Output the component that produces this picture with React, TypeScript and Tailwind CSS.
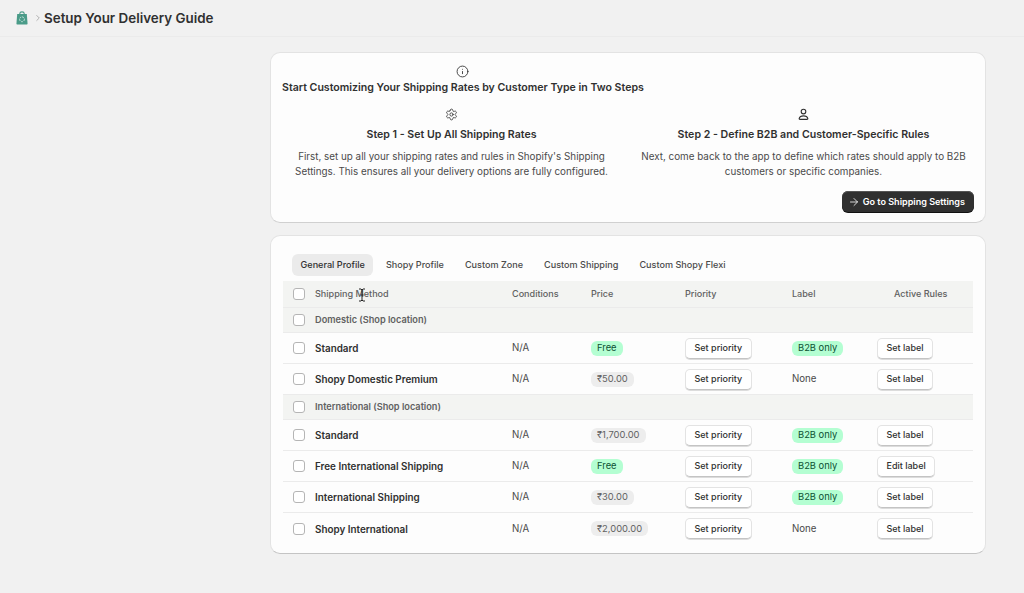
import React from "react";
import { ArrowRight, ChevronRight, Info, Settings } from "lucide-react";

const COLS = "grid grid-cols-[22px_197px_79px_94px_107px_85px_1fr] items-center";

function Check() {
  return <span className="block h-[12px] w-[12px] rounded-[3px] border border-[#b5b5b5] bg-white" />;
}

function Btn({ children }: { children: React.ReactNode }) {
  return (
    <span className="inline-flex h-[21px] items-center rounded-[5px] border border-[#e3e3e3] border-b-[#c4c4c4] bg-white px-[8.5px] text-[9px] font-medium text-[#303030] shadow-[0_1px_0_#dcdcdc]">
      {children}
    </span>
  );
}

function Pill({ text, green }: { text: string; green: boolean }) {
  return (
    <span className={"inline-flex h-[15px] items-center rounded-[6px] px-[6px] text-[9.4px] " + (green ? "bg-[#b4fed2] text-[#0c5132]" : "bg-[#ededed] text-[#616161]")}>
      {text}
    </span>
  );
}

function Head() {
  return (
    <div className={COLS + " h-[27px] border-b border-[#ebebeb] bg-[#f3f4f2] pl-[10px] text-[9.05px] font-medium text-[#616161]"}>
      <Check />
      <span>Shipping Method</span>
      <span>Conditions</span>
      <span>Price</span>
      <span>Priority</span>
      <span>Label</span>
      <span className="pl-[17px]">Active Rules</span>
    </div>
  );
}

function Group({ name }: { name: string }) {
  return (
    <div className={COLS + " h-[25px] border-b border-[#ebebeb] bg-[#f3f4f2] pl-[10px] text-[9.2px] font-semibold text-[#616161]"}>
      <Check />
      <span className="col-span-6">{name}</span>
    </div>
  );
}

function Row({ name, price, free, b2b, action = "Set label", last }: { name: string; price: string; free?: boolean; b2b: boolean; action?: string; last?: boolean }) {
  return (
    <div className={COLS + " h-[31px] pl-[10px] text-[9.7px] leading-[14px] text-[#4a4a4a] " + (last ? "" : "border-b border-[#ebebeb]")}>
      <Check />
      <span className="text-[9.9px] font-semibold text-[#303030]">{name}</span>
      <span>N/A</span>
      <span className="flex items-center"><Pill text={price} green={!!free} /></span>
      <span className="flex items-center"><Btn>Set priority</Btn></span>
      <span className="flex items-center">{b2b ? <Pill text="B2B only" green /> : "None"}</span>
      <span className="flex items-center"><Btn>{action}</Btn></span>
    </div>
  );
}

function Step({ icon, title, lines }: { icon: React.ReactNode; title: string; lines: string[] }) {
  return (
    <div className="flex flex-col items-center text-center">
      {icon}
      <h3 className="mt-[7px] text-[10.6px] leading-[14px] font-semibold text-[#303030]">{title}</h3>
      <p className="mt-[7px] text-[9.85px] leading-[15px] text-[#4a4a4a]">
        {lines.map((l) => (
          <span key={l} className="block whitespace-nowrap">{l}</span>
        ))}
      </p>
    </div>
  );
}

function Person() {
  return (
    <svg viewBox="0 0 13 13" className="h-[13px] w-[13px]" fill="none" stroke="#303030" strokeWidth="1.1">
      <circle cx="6.5" cy="3.6" r="2.3" />
      <path d="M3 11.4h7c.6 0 .9-.4.8-.9-.4-1.6-2-2.6-4.3-2.6s-3.9 1-4.3 2.6c-.1.5.2.9.8.9z" />
    </svg>
  );
}

function Logo() {
  return (
    <svg viewBox="0 0 14 16" className="h-[14px] w-[12px]">
      <path d="M4.5 4V2.5C4.5 1.4 5.5 .8 7 .8s2.5 .6 2.5 1.7V4" fill="none" stroke="#4a9b88" strokeWidth="1.3" />
      <path d="M1.4 3.4h11.2l.9 11.4c0 .5-.3.8-.8.8H1.3c-.5 0-.8-.3-.8-.8z" fill="#4a9b88" />
      <circle cx="7" cy="9.5" r="2.8" fill="none" stroke="#cfe8e1" strokeWidth="1.1" strokeDasharray="2 1" />
    </svg>
  );
}

export default function App() {
  return (
    <div className="relative h-[593px] w-[1024px] overflow-hidden bg-[#f1f1f1] font-['Inter',sans-serif]">
      <header className="flex h-[37px] items-center border-b border-[#ebebeb] pl-[16px]">
        <Logo />
        <ChevronRight className="ml-[5px] h-[10px] w-[10px] text-[#8a8a8a]" strokeWidth={1.5} />
        <h1 className="ml-[1px] text-[13.4px] font-semibold text-[#303030]">Setup Your Delivery Guide</h1>
      </header>

      <main className="ml-[270px] mt-[15px] flex w-[716px] flex-col gap-[12px]">
        <section className="h-[171px] rounded-[10px] border border-[#e3e3e3] border-b-[#d0d0d0] bg-[#fdfdfd] px-[11px] pt-[12px]">
          <div className="flex w-fit flex-col">
            <Info className="mx-auto h-[13px] w-[13px] text-[#303030]" strokeWidth={1.6} />
            <h2 className="mt-[3px] text-[10.6px] leading-[14px] font-semibold text-[#303030]">
              Start Customizing Your Shipping Rates by Customer Type in Two Steps
            </h2>
          </div>
          <div className="ml-px mt-[13px] grid grid-cols-[337px_337px] gap-[15px]">
            <Step
              icon={<Settings className="h-[13px] w-[13px] text-[#303030]" strokeWidth={1.5} />}
              title="Step 1 - Set Up All Shipping Rates"
              lines={["First, set up all your shipping rates and rules in Shopify's Shipping", "Settings. This ensures all your delivery options are fully configured."]}
            />
            <Step
              icon={<Person />}
              title="Step 2 - Define B2B and Customer-Specific Rules"
              lines={["Next, come back to the app to define which rates should apply to B2B", "customers or specific companies."]}
            />
          </div>
          <div className="mt-[12px] flex justify-end">
            <span className="inline-flex h-[21px] items-center gap-[3px] rounded-[6px] bg-[#303030] pl-[6px] pr-[9px] text-[9.05px] font-semibold text-white shadow-[inset_0_1px_0_#555,0_1px_0_#111]">
              <ArrowRight className="h-[12px] w-[12px]" strokeWidth={1.6} />
              Go to Shipping Settings
            </span>
          </div>
        </section>

        <section className="h-[319px] rounded-[10px] border border-[#e3e3e3] border-b-[#c4c4c4] bg-[#fdfdfd] px-[12px] pt-[18px]">
          <nav className="flex h-[22px] items-center pl-[9px] text-[9.1px] font-medium text-[#4a4a4a]">
            <span className="flex h-[22px] items-center rounded-[6px] bg-[#ebebeb] px-[8.5px] text-[#303030]">General Profile</span>
            <span className="ml-[3.5px] px-[9px]">Shopy Profile</span>
            <span className="ml-[3px] px-[9px]">Custom Zone</span>
            <span className="ml-[3px] px-[9px]">Custom Shipping</span>
            <span className="ml-[3px] px-[9px]">Custom Shopy Flexi</span>
          </nav>
          <div className="mt-[5px]">
            <Head />
            <Group name="Domestic (Shop location)" />
            <Row name="Standard" price="Free" free b2b />
            <Row name="Shopy Domestic Premium" price="₹50.00" b2b={false} />
            <Group name="International (Shop location)" />
            <Row name="Standard" price="₹1,700.00" b2b />
            <Row name="Free International Shipping" price="Free" free b2b action="Edit label" />
            <Row name="International Shipping" price="₹30.00" b2b />
            <Row name="Shopy International" price="₹2,000.00" b2b={false} last />
          </div>
        </section>
      </main>

      <svg viewBox="0 0 8 14" className="absolute left-[358px] top-[288px] h-[14px] w-[8px]">
        <path d="M1 1h2l1 1 1-1h2M4 2v10M1 13h2l1-1 1 1h2M2.5 7h3" fill="none" stroke="#222" strokeWidth="1" />
      </svg>
    </div>
  );
}
